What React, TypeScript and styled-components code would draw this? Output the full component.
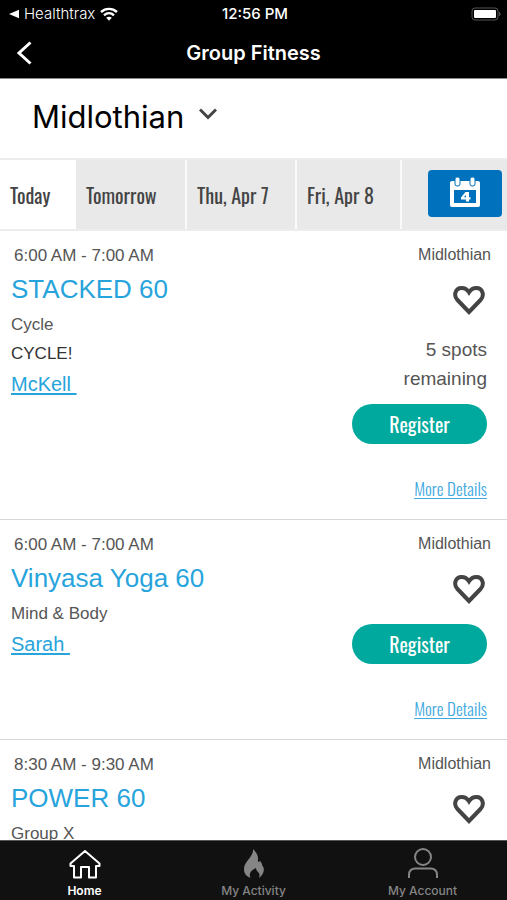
import React from "react";
import styled, { createGlobalStyle } from "styled-components";

const sans = `"Liberation Sans", Arial, sans-serif`;
const narrow = `Oswald, "Liberation Sans Narrow", "Arial Narrow", "Roboto Condensed", "Liberation Sans", sans-serif`;
const system = `Inter, "Liberation Sans", sans-serif`;

const GlobalStyle = createGlobalStyle`
  * { box-sizing: border-box; }
  body { margin: 0; background: #fff; color: #555; font-family: ${sans}; }
  button, select { font: inherit; color: inherit; border: 0; background: none; padding: 0; margin: 0; cursor: pointer; }
  svg { display: block; }
  h1, h2, p, ul { margin: 0; padding: 0; }
`;

const Screen = styled.div`
  display: flex;
  flex-direction: column;
  height: 100vh;
  overflow: hidden;
`;

const Header = styled.header`
  flex: none;
  background: #000;
  color: #fff;
  font-family: ${system};
  border-bottom: 1px solid #8a8a8a;
`;

const StatusBar = styled.div`
  display: grid;
  grid-template-columns: 1fr auto 1fr;
  align-items: center;
  height: 28px;
  padding: 0 6px 0 9px;
  line-height: 16px;
`;

const StatusLeft = styled.div`
  display: flex;
  align-items: center;
  gap: 5px;
  font-size: 15px;
  font-weight: 300;
`;

const Clock = styled.time`
  font-size: 15px;
  font-weight: 500;
`;

const BatteryWrap = styled.div`
  justify-self: end;
`;

const TitleBar = styled.div`
  display: grid;
  grid-template-columns: 1fr auto 1fr;
  align-items: center;
  height: 50px;
  padding: 0 16px;
`;

const Title = styled.h1`
  font-size: 20px;
  line-height: 24px;
  font-weight: 600;
`;

const IconButton = styled.button`
  display: flex;
`;

const Main = styled.main`
  flex: 1;
  min-height: 0;
  overflow: hidden;
`;

const LocationBar = styled.div`
  display: flex;
  align-items: center;
  gap: 14px;
  height: 79px;
  padding: 0 32px 4px;
`;

const LocationSelect = styled.select`
  appearance: none;
  font-family: ${system};
  font-size: 31px;
  line-height: 36px;
  color: #000;
`;

const ChevronWrap = styled.span`
  padding-bottom: 6px;
`;

const Days = styled.nav`
  display: grid;
  grid-template-columns: 76fr 111fr 110fr 105fr 105fr;
  height: 73px;
  border-top: 2px solid #ececec;
  border-bottom: 2px solid #ececec;
`;

const Day = styled.button<{ $active?: boolean }>`
  padding-left: 10px;
  text-align: left;
  font-family: ${narrow};
  font-size: 20px;
  line-height: 24px;
  color: #444;
  white-space: nowrap;
  background: ${(p) => (p.$active ? "#fff" : "#e9e9e9")};
  border-right: ${(p) => (p.$active ? "0" : "2px solid #fafafa")};
`;

const CalendarCell = styled.div`
  display: flex;
  align-items: center;
  justify-content: flex-end;
  padding: 0 5px 2px 0;
  background: #e9e9e9;
`;

const CalendarButton = styled.button`
  display: flex;
  align-items: center;
  justify-content: center;
  width: 74px;
  height: 47px;
  padding-bottom: 4px;
  border-radius: 4px;
  background: #0071bc;
`;

const ClassCard = styled.article`
  display: flex;
  justify-content: space-between;
  padding: 13px 20px 19px 11px;
  border-bottom: 1px solid #d8d8d8;
`;

const Details = styled.div`
  display: flex;
  flex-direction: column;
  align-items: flex-start;
`;

const Time = styled.p`
  padding-left: 3px;
  font-size: 17px;
  line-height: 24px;
`;

const ClassName = styled.h2`
  font-size: 26px;
  line-height: 40px;
  font-weight: 400;
  color: #27a4dc;
  padding: 1px 0;
`;

const Category = styled.p<{ $dark?: boolean }>`
  font-size: 17px;
  line-height: 29px;
  color: ${(p) => (p.$dark ? "#333" : "#555")};
`;

const Instructor = styled.a`
  font-size: 20px;
  line-height: 32px;
  color: #27a4dc;
  white-space: pre;
  text-underline-offset: 2px;
`;

const Actions = styled.div`
  display: flex;
  flex-direction: column;
  align-items: flex-end;
  text-align: right;
`;

const Place = styled.p`
  margin-right: -4px;
  font-size: 16px;
  line-height: 22px;
`;

const HeartButton = styled(IconButton)`
  padding: 19px 1px 20px;
`;

const Spots = styled.p`
  width: 90px;
  font-size: 19px;
  line-height: 29px;
  padding-bottom: 11px;
`;

const Register = styled.button`
  width: 135px;
  height: 40px;
  border-radius: 20px;
  background: #00a99d;
  color: #fff;
  font-family: ${narrow};
  font-size: 20px;
  line-height: 40px;
`;

const MoreDetails = styled.a`
  margin-top: 34px;
  font-family: ${narrow};
  font-size: 17px;
  font-weight: 300;
  line-height: 22px;
  color: #3fa9e0;
  text-underline-offset: 2px;
`;

const TabBar = styled.nav`
  flex: none;
  display: grid;
  grid-template-columns: repeat(3, 1fr);
  height: 60px;
  background: #111;
  border-top: 1px solid #555;
`;

const Tab = styled.a<{ $active?: boolean }>`
  display: flex;
  flex-direction: column;
  align-items: center;
  justify-content: flex-end;
  gap: 3px;
  padding-bottom: 1px;
  font-family: ${system};
  font-size: 12px;
  line-height: 16px;
  font-weight: ${(p) => (p.$active ? 600 : 500)};
  color: ${(p) => (p.$active ? "#fff" : "#858585")};
  text-decoration: none;
`;

const Heart = () => (
  <svg width="34" height="30" viewBox="0 0 34 30" fill="none" stroke="#444" strokeWidth="4" aria-hidden="true">
    <path d="M17 27 5.500 15C1.200 10.500 3.200 3 9.600 3c3.600 0 5.900 1.900 7.400 4.300C18.500 4.900 20.800 3 24.400 3c6.400 0 8.400 7.500 4.100 12Z" />
  </svg>
);

const Calendar = () => (
  <svg width="32" height="32" viewBox="0 0 32 32" aria-hidden="true">
    <rect x="1" y="5" width="30" height="26" rx="2" fill="#fff" />
    <rect x="5" y="14" width="22" height="13" fill="#0071bc" />
    <rect x="6" y="1" width="5" height="9" rx="2" fill="#fff" stroke="#0071bc" />
    <rect x="21" y="1" width="5" height="9" rx="2" fill="#fff" stroke="#0071bc" />
    <path fillRule="evenodd" fill="#fff" d="M16.500 16H20v5.200h1.500v2.200H20v2h-3v-2h-5v-2Zm.5 3-2.200 2.200H17Z" />
  </svg>
);

const HomeIcon = () => (
  <svg width="32" height="30" viewBox="0 0 32 30" fill="none" stroke="currentColor" strokeWidth="2" strokeLinejoin="round" aria-hidden="true">
    <path d="M16 1 1.500 13.500v2.500H5V27.500h7V17h8v10.500h7V16h3.500v-2.500Z" />
  </svg>
);

const FlameIcon = () => (
  <svg width="22" height="31" viewBox="0 0 22 31" fill="currentColor" aria-hidden="true">
    <path d="M10 0c3 3 5.500 6.500 5 10.500-.2 1.500 0 2.500.6 2.500.8 0 1-.6.9-1.500 2 1.500 2.300 3 3 5.500 1.500 1.500 1.700 4 .8 6.500-.8 2.200-2.300 4-4.300 5.500.8-2.500.7-4-.5-5.500-1-1.200-2.500-2-2.500-4.500-2.500 1.200-5.500 3-6 5.500-.4 1.800-.2 3 .5 4.500C3.500 27.500 1 24.500 1 20.500 1 15 4.500 12 7 8.500 9 5.500 10.300 3.500 10 0Z" />
  </svg>
);

const PersonIcon = () => (
  <svg width="32" height="32" viewBox="0 0 32 32" fill="none" stroke="currentColor" strokeWidth="2" aria-hidden="true">
    <circle cx="16" cy="9" r="8" />
    <path d="M2 30v-3c0-4 2.500-6.500 6.500-6.500h15c4 0 6.500 2.500 6.500 6.500v3" />
  </svg>
);

interface FitnessClass {
  time: string;
  name: string;
  category: string;
  note?: string;
  instructor?: string;
  spots?: string;
}

const classes: FitnessClass[] = [
  { time: "6:00 AM - 7:00 AM", name: "STACKED 60", category: "Cycle", note: "CYCLE!", instructor: "McKell", spots: "5 spots remaining" },
  { time: "6:00 AM - 7:00 AM", name: "Vinyasa Yoga 60", category: "Mind & Body", instructor: "Sarah" },
  { time: "8:30 AM - 9:30 AM", name: "POWER 60", category: "Group X" },
];

const days = ["Today", "Tomorrow", "Thu, Apr 7", "Fri, Apr 8"];

export default function App() {
  return (
    <Screen>
      <GlobalStyle />
      <Header>
        <StatusBar>
          <StatusLeft>
            <svg width="10" height="10" viewBox="0 0 10 10" fill="#fff" aria-hidden="true"><path d="M10 .8v8.400L0 5Z" /></svg>
            Healthtrax
            <svg width="18" height="14" viewBox="0 0 18 14" fill="none" stroke="#fff" strokeWidth="2.400" aria-hidden="true">
              <path d="M1 5c4.500-4.200 11.500-4.200 16 0M4 8.300c3-2.700 7-2.700 10 0" />
              <path d="M6.200 10.800c1.600-1.500 4-1.500 5.600 0L9 13.800Z" fill="#fff" stroke="none" />
            </svg>
          </StatusLeft>
          <Clock>12:56 PM</Clock>
          <BatteryWrap>
            <svg width="30" height="14" viewBox="0 0 30 14" role="img" aria-label="Battery full">
              <rect x="1" y="1" width="26" height="12" rx="3" fill="none" stroke="#555" />
              <rect x="3" y="3" width="22" height="8" rx="1" fill="#fff" />
              <path d="M28 5c2 .6 2 3.400 0 4Z" fill="#555" />
            </svg>
          </BatteryWrap>
        </StatusBar>
        <TitleBar>
          <IconButton aria-label="Back">
            <svg width="16" height="24" viewBox="0 0 16 24" fill="none" stroke="#fff" strokeWidth="3" aria-hidden="true"><path d="M14.500 1.500 3 12l11.500 10.500" /></svg>
          </IconButton>
          <Title>Group Fitness</Title>
        </TitleBar>
      </Header>
      <Main>
        <LocationBar>
          <LocationSelect id="location" aria-label="Location"><option>Midlothian</option></LocationSelect>
          <ChevronWrap>
            <svg width="18" height="12" viewBox="0 0 18 12" fill="none" stroke="#444" strokeWidth="3" aria-hidden="true"><path d="m1 1.500 8 8 8-8" /></svg>
          </ChevronWrap>
        </LocationBar>
        <Days aria-label="Day">
          {days.map((day, i) => <Day key={day} $active={i === 0}>{day}</Day>)}
          <CalendarCell><CalendarButton aria-label="Choose a date"><Calendar /></CalendarButton></CalendarCell>
        </Days>
        {classes.map((c) => (
          <ClassCard key={c.name}>
            <Details>
              <Time>{c.time}</Time>
              <ClassName>{c.name}</ClassName>
              <Category>{c.category}</Category>
              {c.note && <Category $dark>{c.note}</Category>}
              {c.instructor && <Instructor href="#">{c.instructor + " "}</Instructor>}
            </Details>
            <Actions>
              <Place>Midlothian</Place>
              <HeartButton aria-label={"Add " + c.name + " to favorites"}><Heart /></HeartButton>
              {c.spots && <Spots>{c.spots}</Spots>}
              <Register>Register</Register>
              <MoreDetails href="#">More Details</MoreDetails>
            </Actions>
          </ClassCard>
        ))}
      </Main>
      <TabBar aria-label="Main">
        <Tab href="#" $active><HomeIcon />Home</Tab>
        <Tab href="#"><FlameIcon />My Activity</Tab>
        <Tab href="#"><PersonIcon />My Account</Tab>
      </TabBar>
    </Screen>
  );
}
